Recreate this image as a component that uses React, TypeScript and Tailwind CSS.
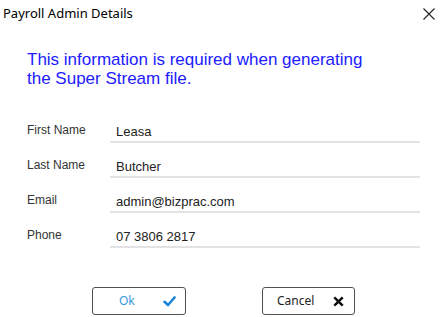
export default function App() {
  const rows = [
    { label: 'First Name', value: 'Leasa' },
    { label: 'Last Name', value: 'Butcher' },
    { label: 'Email', value: 'admin@bizprac.com' },
    { label: 'Phone', value: '07 3806 2817' },
  ];

  return (
    <div className="w-[446px] h-[317px] bg-white flex flex-col overflow-hidden">
      {/* title bar */}
      <div className="h-[30px] flex items-start justify-between">
        <span className="pl-[3px] pt-[5px] text-[13px] leading-[17px] text-black font-['Noto_Sans',sans-serif]">
          Payroll Admin Details
        </span>
        <svg width="12" height="12" viewBox="0 0 12 12" className="mt-[8px] mr-[11px]">
          <path d="M0.5 0.5 L11.5 11.5 M11.5 0.5 L0.5 11.5" stroke="#222" strokeWidth="1.1" fill="none" />
        </svg>
      </div>

      <p className="mt-[20px] pl-[27px] text-[17px] leading-[19px] text-[#2020ff] font-['Liberation_Sans',sans-serif]">
        This information is required when generating
        <br />
        the Super Stream file.
      </p>

      <div className="mt-[20px] flex flex-col">
        {rows.map((r) => (
          <div key={r.label} className="flex h-[35px]">
            <div className="w-[110px] pl-[27px] pt-[15px] text-[12px] leading-[14px] text-[#333] font-['Liberation_Sans',sans-serif]">
              {r.label}
            </div>
            <div className="w-[310px] border-b-2 border-[#e3e3e3] pt-[16px] pl-[6px] text-[13px] leading-[15px] text-[#222] font-['Liberation_Sans',sans-serif]">
              {r.value}
            </div>
          </div>
        ))}
      </div>

      <div className="mt-[39px] pl-[92px] flex gap-[76px] font-['Noto_Sans',sans-serif] text-[12px]">
        <button className="w-[94px] h-[28px] border border-[#505050] rounded-[3px] flex items-center pl-[26px] pr-[8px] bg-white">
          <span className="text-[#3a9ad9]">Ok</span>
          <svg width="13" height="11" viewBox="0 0 13 11" className="ml-auto mr-[1px]">
            <path d="M1.5 5.8 L5 9 L11.5 1.5" stroke="#1a86d8" strokeWidth="2.6" fill="none" strokeLinecap="round" strokeLinejoin="round" />
          </svg>
        </button>
        <button className="w-[93px] h-[28px] border border-[#505050] rounded-[3px] flex items-center pl-[14px] pr-[10px] bg-white">
          <span className="text-[#222]">Cancel</span>
          <svg width="11" height="11" viewBox="0 0 11 11" className="ml-auto">
            <path d="M1.3 1.3 L9.7 9.7 M9.7 1.3 L1.3 9.7" stroke="#111" strokeWidth="2.5" fill="none" />
          </svg>
        </button>
      </div>
    </div>
  );
}
